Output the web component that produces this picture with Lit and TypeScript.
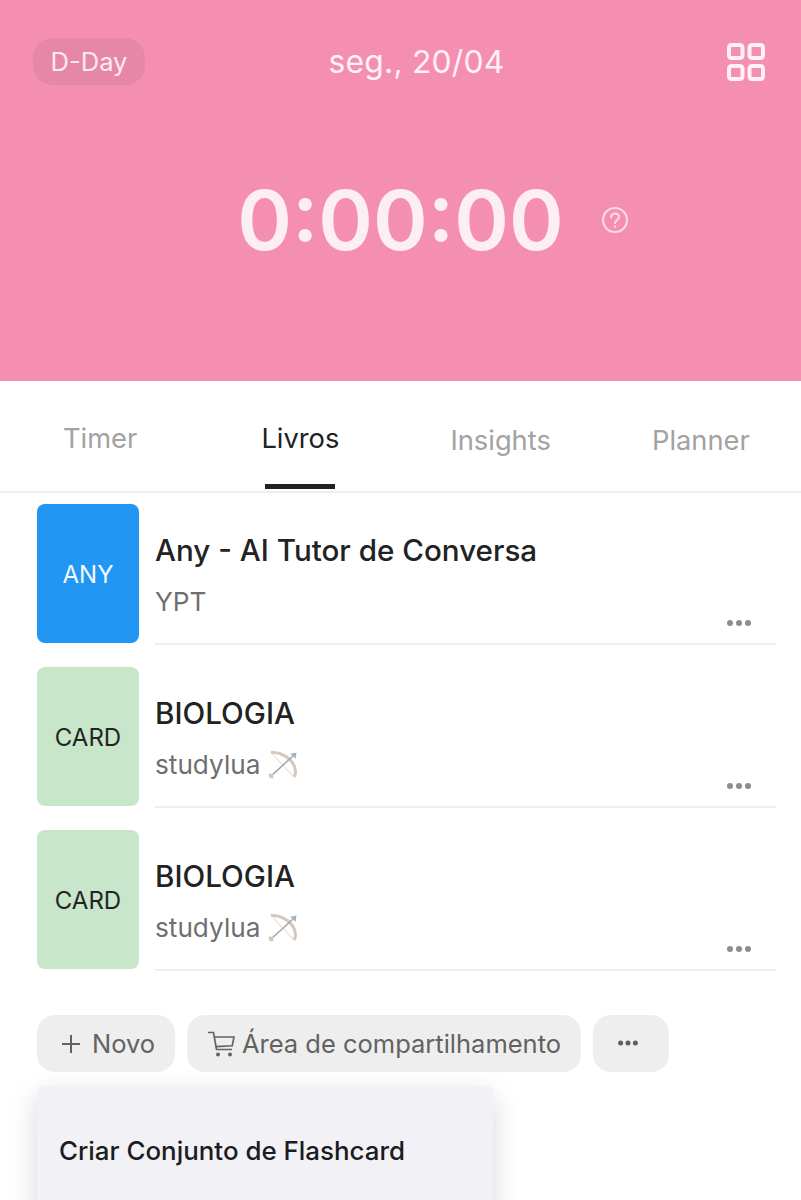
import { LitElement, html, css, svg } from "lit";
import { customElement } from "lit/decorators.js";

const dots = svg`<svg width="26" height="8" viewBox="0 0 26 8"><circle cx="4" cy="4" r="3"/><circle cx="13" cy="4" r="3"/><circle cx="22" cy="4" r="3"/></svg>`;
const smallDots = svg`<svg width="20" height="6" viewBox="0 0 20 6"><circle cx="2.6" cy="3" r="2.5"/><circle cx="10" cy="3" r="2.5"/><circle cx="17.4" cy="3" r="2.5"/></svg>`;

const bow = html`<svg class="bow" width="32" height="28" viewBox="0 0 32 28" fill="none">
  <path d="M4 1.5C14 1 24 7 27.5 15.5C29 20 28.5 24 27 26" stroke="#d6c8bc" stroke-width="3"/>
  <path d="M4 1.5L27 26" stroke="#ddd6d0" stroke-width="1"/>
  <path d="M3 26L26 5" stroke="#a9a5a2" stroke-width="1.6"/>
  <path d="M23 3L29.5 1.5L28.5 8L26 5Z" fill="#9fb0bd"/>
  <path d="M1.5 22.5L6 23L6.5 27.5L2.5 27Z" fill="#cfc9c6"/>
</svg>`;

@customElement("app-root")
export class AppRoot extends LitElement {
  static styles = css`
    :host {
      display: block;
      width: 801px;
      height: 1200px;
      overflow: hidden;
      background: #fff;
      font-family: Inter, "Liberation Sans", sans-serif;
      color: #222;
    }
    .hero {
      height: 381px;
      box-sizing: border-box;
      background: #f48fb1;
      color: #fff;
      padding-top: 38px;
    }
    .top {
      display: grid;
      grid-template-columns: 1fr auto 1fr;
      align-items: center;
      padding: 0 36px 0 33px;
      height: 47px;
    }
    .dday {
      justify-self: start;
      width: 112px;
      height: 47px;
      border-radius: 20px;
      background: #e687a8;
      color: #fdeaf1;
      font-size: 25.5px;
      display: flex;
      align-items: center;
      justify-content: center;
    }
    .date {
      font-size: 31.8px;
      letter-spacing: 0.2px;
      color: #fff1f6;
      margin-left: 35px;
    }
    .grid-ic {
      justify-self: end;
      display: block;
    }
    .clock {
      margin-top: 87px;
      display: grid;
      grid-template-columns: 1fr auto 1fr;
      align-items: center;
    }
    .time {
      font-size: 83px;
      line-height: 96px;
      font-weight: 600;
      color: #fdeef4;
    }
    .help {
      margin-left: 37px;
      display: block;
    }
    .tabs {
      height: 112px;
      box-sizing: border-box;
      border-bottom: 2px solid #eeeef0;
      display: grid;
      grid-template-columns: repeat(4, 1fr);
    }
    .tab {
      font-size: 27.3px;
      color: #a2a2a2;
      display: flex;
      flex-direction: column;
      align-items: center;
      padding-top: 41px;
      line-height: 33px;
    }
    .tab.low { padding-top: 43px; }
    .tab.on { color: #222; }
    .tab.on i {
      display: block;
      width: 70px;
      height: 5px;
      margin-top: 29px;
      background: #222;
    }
    .list {
      display: flex;
      flex-direction: column;
      gap: 24px;
      padding: 11px 25px 0 37px;
    }
    .row {
      display: flex;
      gap: 16px;
      height: 139px;
    }
    .cover {
      width: 102px;
      flex: none;
      box-sizing: border-box;
      border-radius: 8px;
      display: flex;
      align-items: center;
      justify-content: center;
      font-size: 24px;
      padding-top: 2px;
    }
    .cover.blue { background: #2196f3; color: #f2f9ff; }
    .cover.green { background: #c8e6c9; color: #242424; }
    .info {
      flex: 1;
      position: relative;
      box-sizing: border-box;
      border-bottom: 2px solid #eeeef0;
      height: 141px;
      padding-top: 26px;
    }
    .title {
      font-size: 29.6px;
      line-height: 40px;
      font-weight: 500;
      color: #222;
    }
    .sub {
      margin-top: 12px;
      font-size: 26.2px;
      line-height: 40px;
      color: #6f6f6f;
      display: flex;
      align-items: center;
      gap: 7px;
    }
    .bow { display: block; }
    .more {
      position: absolute;
      right: 24px;
      bottom: 12px;
      display: block;
      fill: #8d8d8d;
    }
    .actions {
      display: flex;
      gap: 12px;
      padding: 46px 0 0 37px;
    }
    .btn {
      height: 57px;
      box-sizing: border-box;
      border-radius: 18px;
      background: #eeeeee;
      color: #626262;
      font-size: 25.5px;
      display: flex;
      align-items: center;
      justify-content: center;
      white-space: nowrap;
    }
    .novo { width: 138px; gap: 12px; padding-left: 5px; }
    .share { width: 394px; gap: 7px; }
    .dots { width: 76px; fill: #5e5e5e; padding: 0 6px 1px 0; }
    .menu {
      margin: 14px 0 0 37px;
      width: 456px;
      height: 200px;
      box-sizing: border-box;
      background: #f1f1f6;
      border-radius: 6px;
      box-shadow: 0 10px 28px rgba(0, 0, 0, 0.16);
      padding: 45px 0 0 22px;
      font-size: 25.9px;
      line-height: 40px;
      font-weight: 500;
      color: #1c1c1e;
    }
  `;

  private book(tag: string, cls: string, title: string, author: string, emoji: boolean) {
    return html`<div class="row">
      <div class="cover ${cls}">${tag}</div>
      <div class="info">
        <div class="title">${title}</div>
        <div class="sub">${author}${emoji ? bow : ""}</div>
        <span class="more">${dots}</span>
      </div>
    </div>`;
  }

  render() {
    return html`
      <section class="hero">
        <div class="top">
          <div class="dday">D-Day</div>
          <div class="date">seg., 20/04</div>
          <svg class="grid-ic" width="38" height="38" viewBox="0 0 38 38" fill="none" stroke="#fff1f6" stroke-width="4">
            <rect x="2" y="2" width="13.5" height="13" rx="2.5" />
            <rect x="22.5" y="2" width="13.5" height="13" rx="2.5" />
            <rect x="2" y="23" width="13.5" height="13" rx="2.5" />
            <rect x="22.5" y="23" width="13.5" height="13" rx="2.5" />
          </svg>
        </div>
        <div class="clock">
          <span></span>
          <div class="time">0:00:00</div>
          <svg class="help" width="28" height="28" viewBox="0 0 28 28" fill="none" stroke="#fbd9e5" stroke-width="2.2">
            <circle cx="14" cy="14" r="12" />
            <path d="M10 11.5C10 9 11.8 7.6 14 7.6C16.3 7.6 18 9 18 11.1C18 14 14 14.2 14 17.2" stroke-linecap="round" />
            <circle cx="14" cy="20.6" r="1.2" fill="#fbd9e5" stroke="none" />
          </svg>
        </div>
      </section>
      <nav class="tabs">
        <div class="tab">Timer</div>
        <div class="tab on">Livros<i></i></div>
        <div class="tab low">Insights</div>
        <div class="tab low">Planner</div>
      </nav>
      <div class="list">
        ${this.book("ANY", "blue", "Any - AI Tutor de Conversa", "YPT", false)}
        ${this.book("CARD", "green", "BIOLOGIA", "studylua", true)}
        ${this.book("CARD", "green", "BIOLOGIA", "studylua", true)}
      </div>
      <div class="actions">
        <div class="btn novo">
          <svg width="18" height="18" viewBox="0 0 18 18" stroke="#626262" stroke-width="2"><path d="M9 0V18M0 9H18" /></svg>
          Novo
        </div>
        <div class="btn share">
          <svg width="28" height="26" viewBox="0 0 28 26" fill="none" stroke="#626262" stroke-width="1.7">
            <path d="M1 1.5H6.5L9.5 18.5H25" />
            <path d="M7 6H27L25.2 14.8L8.7 15.6" />
            <circle cx="11" cy="23.4" r="2" fill="#626262" stroke="none" />
            <circle cx="23" cy="23.4" r="2" fill="#626262" stroke="none" />
          </svg>
          Área de compartilhamento
        </div>
        <div class="btn dots">${smallDots}</div>
      </div>
      <div class="menu">Criar Conjunto de Flashcard</div>
    `;
  }
}
